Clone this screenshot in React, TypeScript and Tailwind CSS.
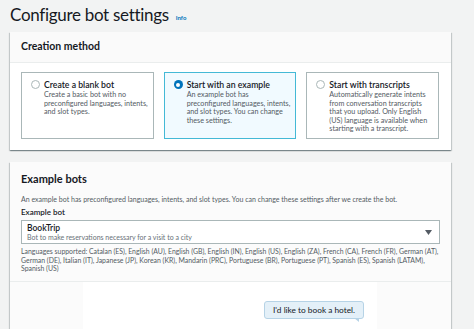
import React from "react";

const shadow =
  "shadow-[0_1px_1px_0_rgba(0,28,36,0.3),1px_1px_1px_0_rgba(0,28,36,0.15),-1px_1px_1px_0_rgba(0,28,36,0.15)]";

function Radio({ checked }: { checked?: boolean }) {
  if (checked) {
    return (
      <span className="mt-[1px] flex h-[9px] w-[9px] shrink-0 items-center justify-center rounded-full bg-[#0073bb]">
        <span className="h-[4px] w-[4px] rounded-full bg-white" />
      </span>
    );
  }
  return <span className="mt-[1px] h-[9px] w-[9px] shrink-0 rounded-full border border-[#aab7b8] bg-white" />;
}

function Option({
  title,
  lines,
  checked,
}: {
  title: string;
  lines: string[];
  checked?: boolean;
}) {
  return (
    <div
      className={
        checked
          ? "h-[67px] border border-[#44b9d6] bg-[#f1faff] pl-[9px] pt-[6px]"
          : "h-[67px] border border-[#aab7b8] bg-white pl-[9px] pt-[6px]"
      }
    >
      <div className="flex gap-[4px]">
        <Radio checked={checked} />
        <div>
          <div className="whitespace-nowrap text-[8.7px] leading-[11px] font-semibold text-[#16191f]">{title}</div>
          <div className="mt-[1px] whitespace-nowrap text-[7.2px] leading-[8.5px] text-[#545b64]">
            {lines.map((l, i) => (
              <div key={i}>{l}</div>
            ))}
          </div>
        </div>
      </div>
    </div>
  );
}

export default function App() {
  return (
    <div
      className="h-[329px] w-[474px] overflow-hidden bg-[#f2f3f3] text-[#16191f]"
      style={{ fontFamily: 'Lato, "Liberation Sans", sans-serif' }}
    >
      <div className="pl-[10px] pr-[23px]">
        <div className="flex h-[32px] items-center gap-[7px] pb-[2px]">
          <h1 className="whitespace-nowrap text-[17px] leading-[26px] font-normal tracking-[-0.3px] text-[#16191f]">
            Configure bot settings
          </h1>
          <span className="mt-[4px] text-[6px] font-bold text-[#0073bb]">Info</span>
        </div>

        <div className={"bg-white " + shadow}>
          <div className="flex h-[31px] items-center border-b border-[#eaeded] bg-[#fafafa] px-[11px] text-[10.5px] font-bold">
            Creation method
          </div>
          <div className="grid grid-cols-3 gap-[10px] pl-[11px] pr-[12px] pt-[9px] pb-[11px]">
            <Option
              title="Create a blank bot"
              lines={["Create a basic bot with no", "preconfigured languages, intents,", "and slot types."]}
            />
            <Option
              checked
              title="Start with an example"
              lines={[
                "An example bot has",
                "preconfigured languages, intents,",
                "and slot types. You can change",
                "these settings.",
              ]}
            />
            <Option
              title="Start with transcripts"
              lines={[
                "Automatically generate intents",
                "from conversation transcripts",
                "that you upload. Only English",
                "(US) language is available when",
                "starting with a transcript.",
              ]}
            />
          </div>
        </div>

        <div className={"mt-[12px] bg-[#fbfbfb] " + shadow}>
          <div className="px-[11px] pt-[9px]">
            <div className="text-[11px] leading-[16px] font-bold">Example bots</div>
            <div className="mt-[7px] whitespace-nowrap text-[7px] leading-[10px] text-[#545b64]">
              An example bot has preconfigured languages, intents, and slot types. You can change these settings after we create the bot.
            </div>
            <div className="mt-[3px] text-[8px] leading-[11px] font-semibold">Example bot</div>
            <div className="mt-[2px] flex h-[24px] items-center justify-between border border-[#aab7b8] bg-white pl-[5px] pr-[7px]">
              <div>
                <div className="text-[8.5px] leading-[10px] font-semibold">BookTrip</div>
                <div className="whitespace-nowrap text-[7px] leading-[9px] text-[#687078]">
                  Bot to make reservations necessary for a visit to a city
                </div>
              </div>
              <svg width="7" height="5" viewBox="0 0 7 5">
                <path d="M0 0 L7 0 L3.5 5 Z" fill="#545b64" />
              </svg>
            </div>
            <div className="mt-[3px] whitespace-nowrap pb-[8px] text-[6.9px] leading-[8.5px] text-[#545b64]">
              Languages supported: Catalan (ES), English (AU), English (GB), English (IN), English (US), English (ZA), French (CA), French (FR), German (AT),
              <br />
              German (DE), Italian (IT), Japanese (JP), Korean (KR), Mandarin (PRC), Portuguese (BR), Portuguese (PT), Spanish (ES), Spanish (LATAM),
              <br />
              Spanish (US)
            </div>
          </div>
          <div className="border-t border-[#eaeded] pl-[73px]">
            <div className="flex h-[60px] w-[294px] justify-end bg-white pr-[13px] pt-[19px]">
              <div className="relative h-[18px] whitespace-nowrap rounded-[3px] border border-[#b6d3e6] bg-[#e4f0f8] px-[8px] text-[8.3px] leading-[16px] text-[#16191f]">
                I'd like to book a hotel.
                <span className="absolute -bottom-[4px] right-[4px] h-0 w-0 border-l-[5px] border-t-[4px] border-l-transparent border-t-[#b6d3e6]" />
              </div>
            </div>
          </div>
        </div>
      </div>
    </div>
  );
}
